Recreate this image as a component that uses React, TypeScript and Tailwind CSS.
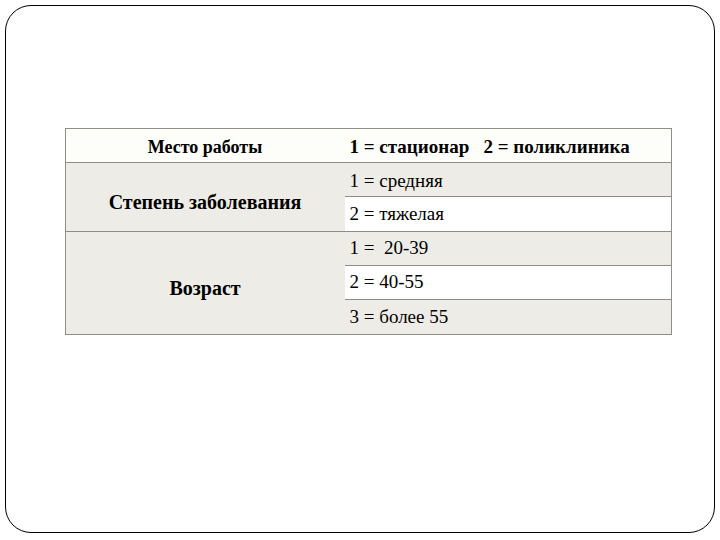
import React from "react";

const serif = { fontFamily: '"Liberation Serif", "Times New Roman", serif' };

function SubCell({ text, gray, last, extra }: { text: string; gray: boolean; last?: boolean; extra?: string }) {
  return (
    <div
      className={`h-[34px] flex items-center pl-[5px] text-[19px] text-black whitespace-pre ${gray ? "bg-[#eeece7]" : "bg-white"} ${last ? "" : "border-b border-[#8e8e86]"} ${extra ?? ""}`}
      style={serif}
    >
      {text}
    </div>
  );
}

export default function App() {
  return (
    <div className="w-[720px] h-[540px] bg-white p-[5px] pb-[7px]">
      <div className="h-full w-[710px] border-[1.5px] border-black rounded-[26px] pt-[122px] pl-[58.5px]">
        <div className="w-[607px] border border-[#8e8e86]">
          <div className="flex h-[34px] border-b border-[#8e8e86] bg-[#fdfdfa]">
            <div className="w-[279px] flex items-center justify-center pt-[4px] font-bold text-[18px] text-black" style={serif}>
              Место работы
            </div>
            <div className="flex-1 flex items-center pt-[4px] pl-[5px] font-bold text-[19px] text-black whitespace-pre" style={serif}>
              1 = стационар   2 = поликлиника
            </div>
          </div>
          <div className="flex border-b border-[#8e8e86] bg-[#eeece7]">
            <div className="w-[279px] flex items-center justify-center pt-[10px] font-bold text-[20px] text-black" style={serif}>
              Степень заболевания
            </div>
            <div className="flex-1 flex flex-col">
              <SubCell text="1 = средняя" gray={true} extra="pt-[4px]" />
              <SubCell text="2 = тяжелая" gray={false} last />
            </div>
          </div>
          <div className="flex bg-[#eeece7]">
            <div className="w-[279px] flex items-center justify-center pt-[10px] font-bold text-[20px] text-black" style={serif}>
              Возраст
            </div>
            <div className="flex-1 flex flex-col">
              <SubCell text="1 =  20-39" gray={true} />
              <SubCell text="2 = 40-55" gray={false} />
              <SubCell text="3 = более 55" gray={true} last />
            </div>
          </div>
        </div>
      </div>
    </div>
  );
}
